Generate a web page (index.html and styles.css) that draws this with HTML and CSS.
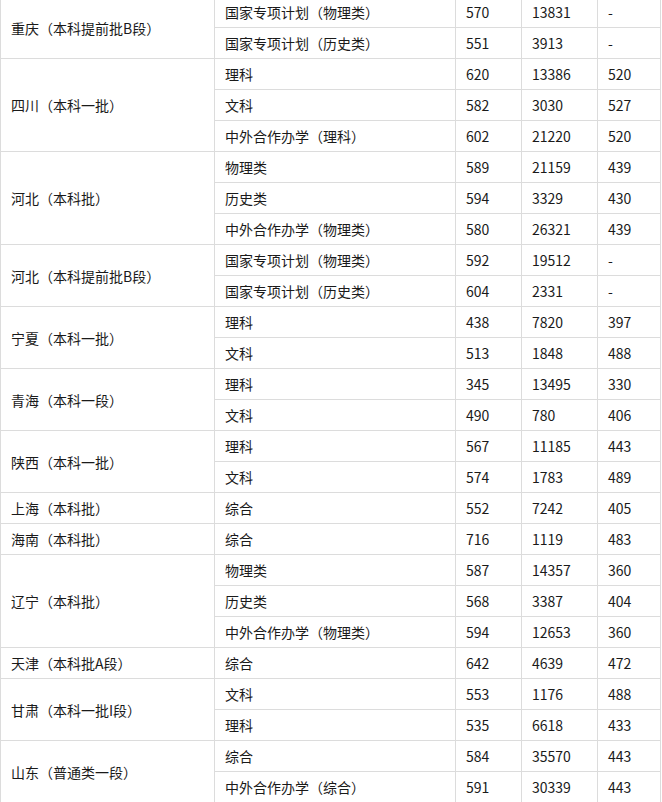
FILE: index.html
```html
<!DOCTYPE html>
<html lang="zh-CN">
<head>
<meta charset="utf-8">
<title>录取分数</title>
<link rel="stylesheet" href="styles.css">
</head>
<body>
<table class="scores">
<colgroup>
<col class="c1"><col class="c2"><col class="c3"><col class="c4"><col class="c5">
</colgroup>
<tbody>
<tr><td rowspan="2">重庆（本科提前批B段）</td><td>国家专项计划（物理类）</td><td>570</td><td>13831</td><td>-</td></tr>
<tr><td>国家专项计划（历史类）</td><td>551</td><td>3913</td><td>-</td></tr>
<tr><td rowspan="3">四川（本科一批）</td><td>理科</td><td>620</td><td>13386</td><td>520</td></tr>
<tr><td>文科</td><td>582</td><td>3030</td><td>527</td></tr>
<tr><td>中外合作办学（理科）</td><td>602</td><td>21220</td><td>520</td></tr>
<tr><td rowspan="3">河北（本科批）</td><td>物理类</td><td>589</td><td>21159</td><td>439</td></tr>
<tr><td>历史类</td><td>594</td><td>3329</td><td>430</td></tr>
<tr><td>中外合作办学（物理类）</td><td>580</td><td>26321</td><td>439</td></tr>
<tr><td rowspan="2">河北（本科提前批B段）</td><td>国家专项计划（物理类）</td><td>592</td><td>19512</td><td>-</td></tr>
<tr><td>国家专项计划（历史类）</td><td>604</td><td>2331</td><td>-</td></tr>
<tr><td rowspan="2">宁夏（本科一批）</td><td>理科</td><td>438</td><td>7820</td><td>397</td></tr>
<tr><td>文科</td><td>513</td><td>1848</td><td>488</td></tr>
<tr><td rowspan="2">青海（本科一段）</td><td>理科</td><td>345</td><td>13495</td><td>330</td></tr>
<tr><td>文科</td><td>490</td><td>780</td><td>406</td></tr>
<tr><td rowspan="2">陕西（本科一批）</td><td>理科</td><td>567</td><td>11185</td><td>443</td></tr>
<tr><td>文科</td><td>574</td><td>1783</td><td>489</td></tr>
<tr><td>上海（本科批）</td><td>综合</td><td>552</td><td>7242</td><td>405</td></tr>
<tr><td>海南（本科批）</td><td>综合</td><td>716</td><td>1119</td><td>483</td></tr>
<tr><td rowspan="3">辽宁（本科批）</td><td>物理类</td><td>587</td><td>14357</td><td>360</td></tr>
<tr><td>历史类</td><td>568</td><td>3387</td><td>404</td></tr>
<tr><td>中外合作办学（物理类）</td><td>594</td><td>12653</td><td>360</td></tr>
<tr><td>天津（本科批A段）</td><td>综合</td><td>642</td><td>4639</td><td>472</td></tr>
<tr><td rowspan="2">甘肃（本科一批I段）</td><td>文科</td><td>553</td><td>1176</td><td>488</td></tr>
<tr><td>理科</td><td>535</td><td>6618</td><td>433</td></tr>
<tr><td rowspan="2">山东（普通类一段）</td><td>综合</td><td>584</td><td>35570</td><td>443</td></tr>
<tr><td>中外合作办学（综合）</td><td>591</td><td>30339</td><td>443</td></tr>
</tbody>
</table>
</body>
</html>
```
FILE: styles.css
```css
html, body {
  margin: 0;
  padding: 0;
  background: #fff;
}
body {
  font-family: "Noto Sans CJK SC", "Noto Sans", sans-serif;
  font-size: 14px;
  color: #1a1a1a;
}
.scores {
  margin-top: -4px;
  width: 660px;
  table-layout: fixed;
  border-collapse: collapse;
}
.c1 { width: 214px; }
.c2 { width: 241px; }
.c3 { width: 66px; }
.c4 { width: 76px; }
.c5 { width: 63px; }
.scores td {
  border: 1px solid #dcdcdc;
  height: 30px;
  padding: 0 10px;
  line-height: 20px;
  vertical-align: middle;
  white-space: nowrap;
}
```
